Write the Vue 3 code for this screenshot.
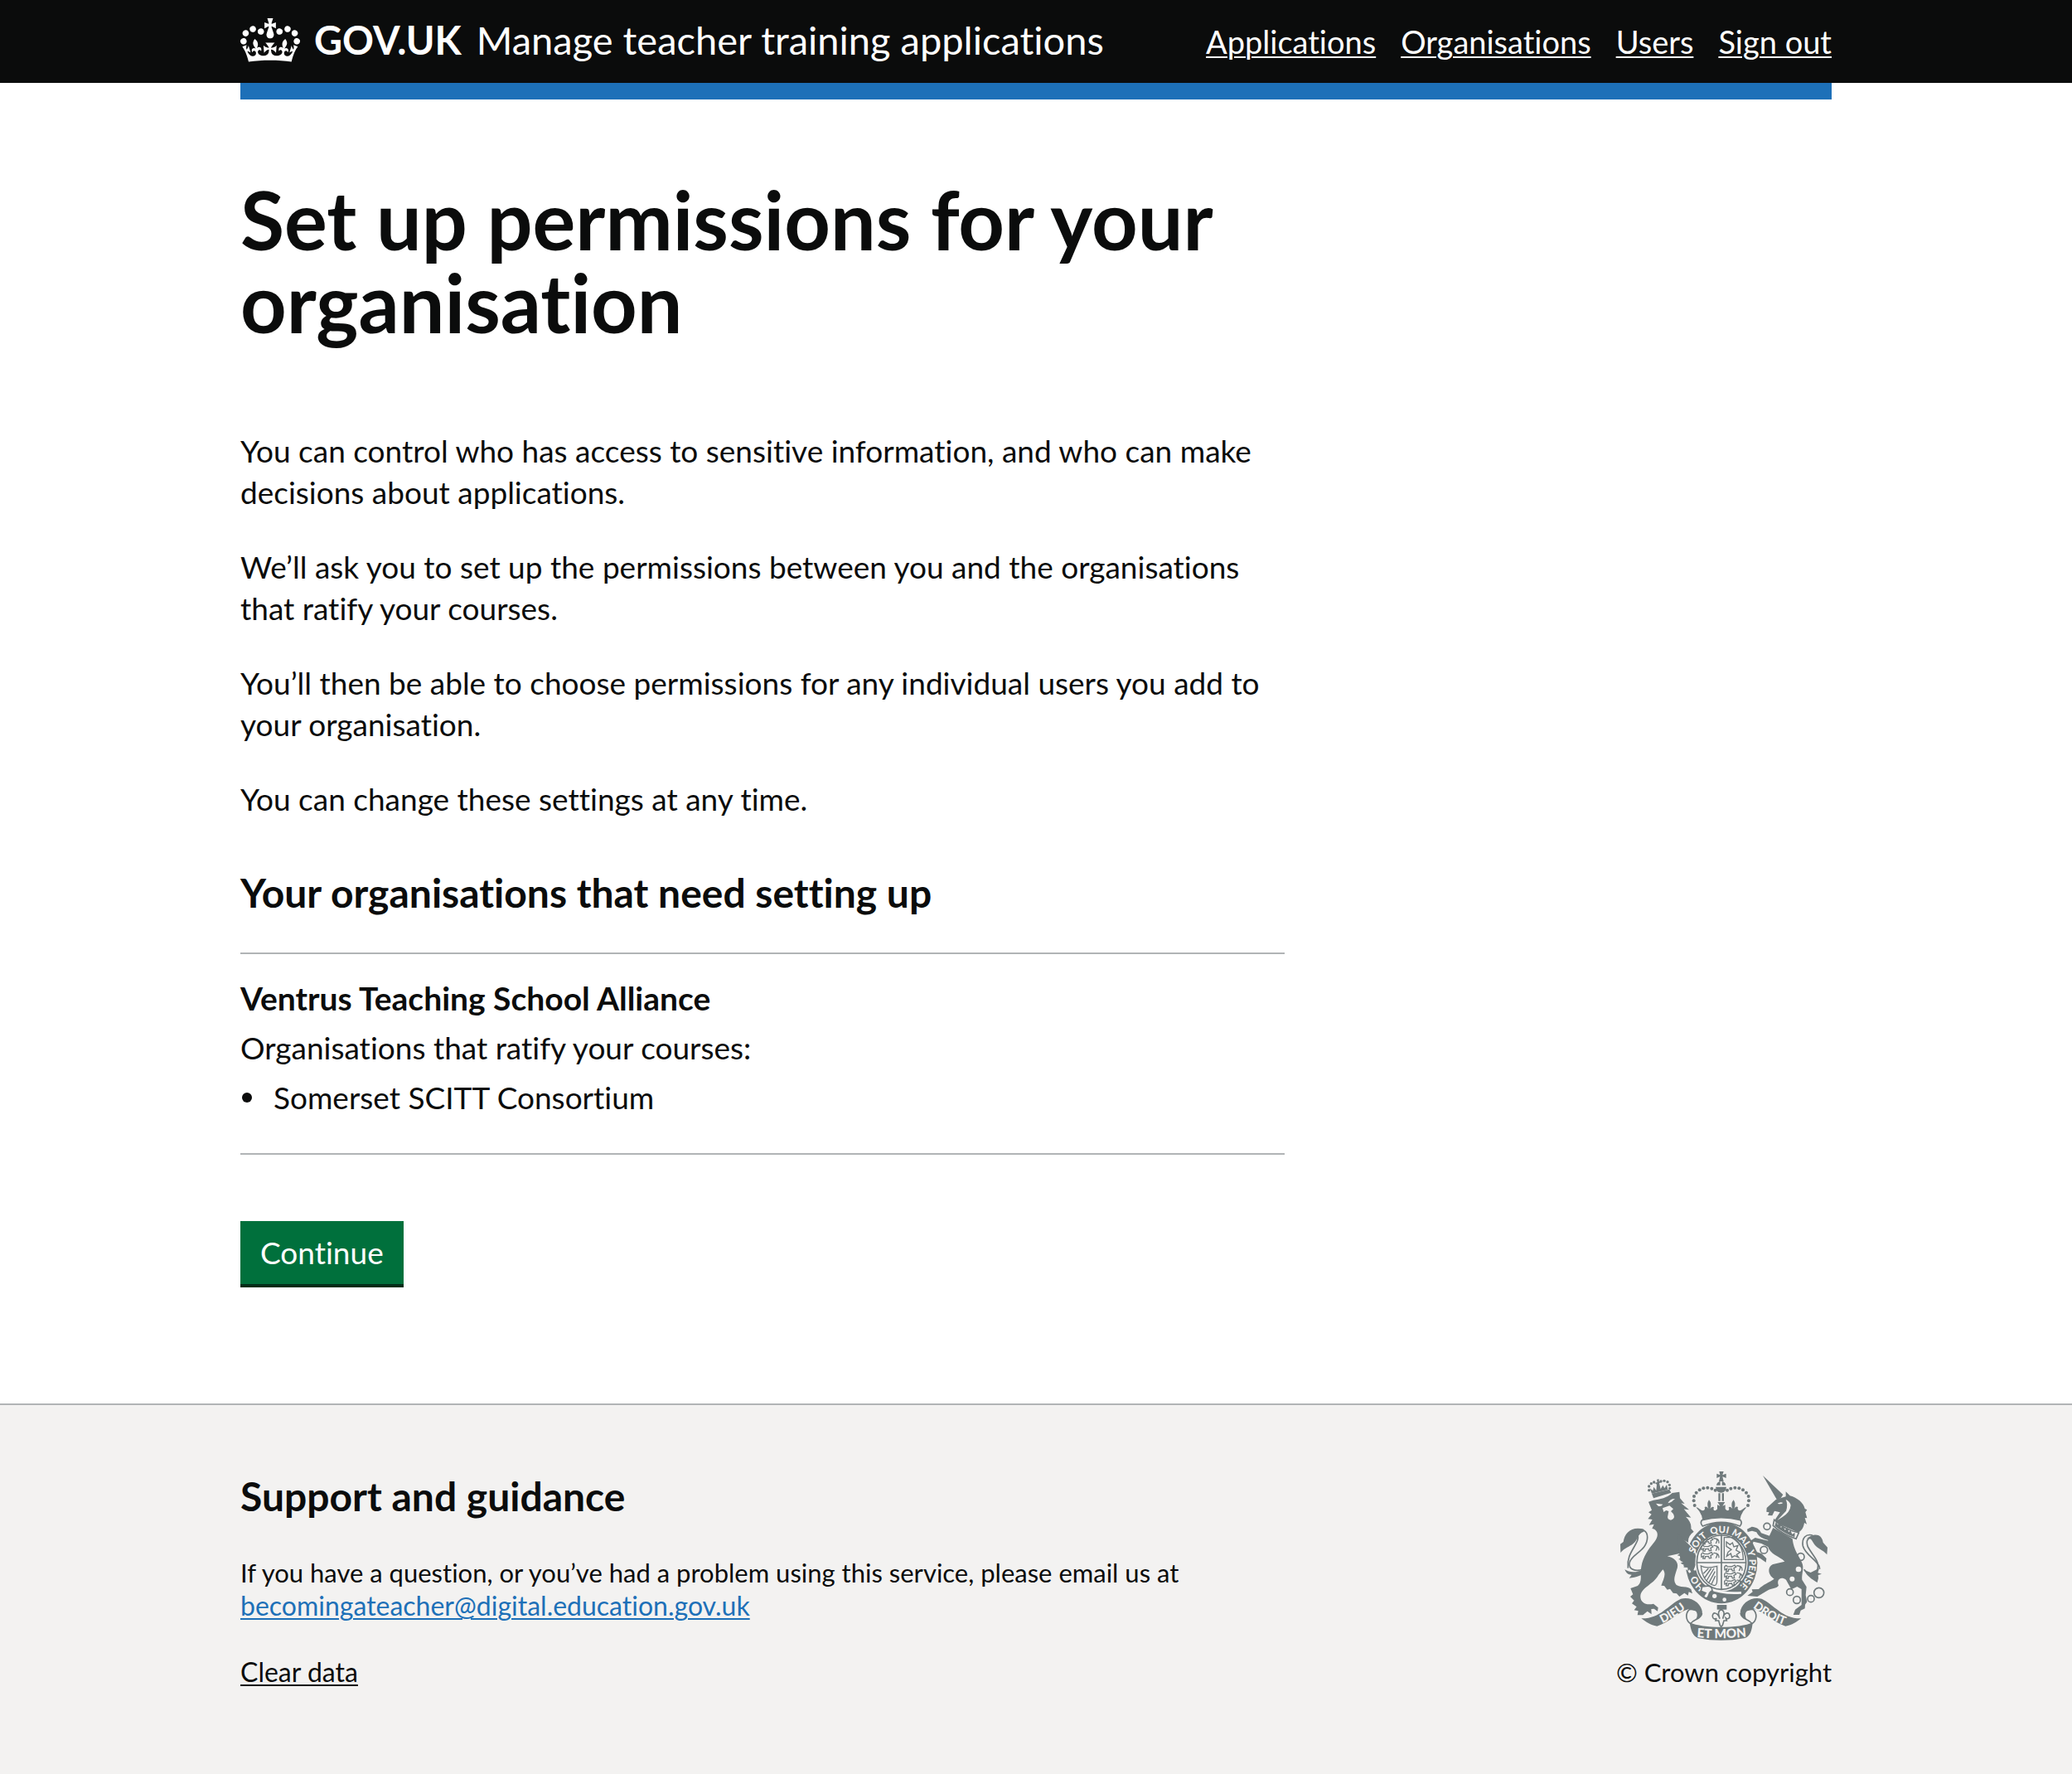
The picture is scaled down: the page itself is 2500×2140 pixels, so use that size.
<script setup>
const navigation = ['Applications', 'Organisations', 'Users', 'Sign out']

const paragraphs = [
  'You can control who has access to sensitive information, and who can make decisions about applications.',
  'We’ll ask you to set up the permissions between you and the organisations that ratify your courses.',
  'You’ll then be able to choose permissions for any individual users you add to your organisation.',
  'You can change these settings at any time.',
]

const organisations = [
  { name: 'Ventrus Teaching School Alliance', ratifiers: ['Somerset SCITT Consortium'] },
]

// Pearls on the left arch of the central crown; the right arch is mirrored.
const pearls = [
  [341, 171], [338, 154], [339, 138], [347, 125], [359, 115], [373, 109], [388, 107], [403, 110], [416, 116],
]

// Pearls on the lion's crown.
const lionPearls = [
  [176, 116], [176, 102], [184, 92], [194, 87], [219, 84], [231, 82], [243, 86], [250, 97], [251, 109],
]

// Origin of each walking lion on the shield.
const shieldLions = [[362, 287], [362, 313], [362, 340], [446, 386], [446, 412], [446, 438]]

// Words of the garter, placed clockwise from the foot of the ring.
const garterWords = [
  { text: 'HO', at: '14%' },
  { text: 'SOIT', at: '36%' },
  { text: 'QUI', at: '49%' },
  { text: 'MAL', at: '61%' },
  { text: 'Y', at: '70%' },
  { text: 'PENSE', at: '81%' },
]
</script>

<template>
  <div class="page">
    <header class="header">
      <div class="container header-row">
        <a class="logo" href="#">
          <svg class="logo-crown" viewBox="0 0 132 97" aria-hidden="true">
            <path fill="currentColor" fill-rule="evenodd" d="M25 30.2c3.5 1.5 7.7-.2 9.1-3.7 1.5-3.6-.2-7.8-3.9-9.2-3.6-1.4-7.6.3-9.1 3.9-1.4 3.5.3 7.5 3.9 9zM9 39.5c3.6 1.5 7.8-.2 9.2-3.7 1.5-3.6-.2-7.8-3.9-9.1-3.6-1.5-7.6.2-9.1 3.8-1.4 3.5.3 7.5 3.8 9zM4.4 57.2c3.5 1.5 7.7-.2 9.1-3.8 1.5-3.6-.2-7.7-3.9-9.1-3.5-1.5-7.6.3-9.1 3.8-1.4 3.5.3 7.6 3.9 9.1zm38.3-21.4c3.5 1.5 7.7-.2 9.1-3.8 1.5-3.6-.2-7.7-3.9-9.1-3.6-1.5-7.6.3-9.1 3.8-1.3 3.6.4 7.7 3.9 9.1zm64.4-5.6c-3.6 1.5-7.8-.2-9.1-3.7-1.5-3.6.2-7.8 3.8-9.2 3.6-1.4 7.7.3 9.2 3.9 1.3 3.5-.4 7.5-3.9 9zm15.9 9.3c-3.6 1.5-7.7-.2-9.1-3.7-1.5-3.6.2-7.8 3.7-9.1 3.6-1.5 7.7.2 9.2 3.8 1.5 3.5-.3 7.5-3.8 9zm4.7 17.7c-3.6 1.5-7.8-.2-9.2-3.8-1.5-3.6.2-7.7 3.9-9.1 3.6-1.5 7.7.3 9.2 3.8 1.3 3.5-.4 7.6-3.9 9.1zM89.3 35.8c-3.6 1.5-7.8-.2-9.2-3.8-1.4-3.6.2-7.7 3.9-9.1 3.6-1.5 7.7.3 9.2 3.8 1.4 3.6-.3 7.7-3.9 9.1zM69.7 17.7l8.9 4.7V9.3l-8.9 2.8c-.2-.3-.5-.6-.9-.9L72.4 0H59.6l3.5 11.2c-.3.3-.6.5-.9.9l-8.8-2.8v13.1l8.8-4.7c.3.3.6.7.9.9l-5 15.4v.1c-.2.8-.4 1.6-.4 2.4 0 4.1 3.1 7.5 7 8.1h.2c.3 0 .7.1 1 .1.4 0 .7 0 1-.1h.2c4-.6 7.1-4.1 7.1-8.1 0-.8-.1-1.7-.4-2.4V34l-5.1-15.4c.4-.2.7-.6 1-.9zM66 92.8c16.9 0 32.8 1.1 47.1 3.2 4-16.9 8.9-26.7 14-33.5l-9.6-3.4c1 4.9 1.1 7.2 0 10.2-1.5-1.4-3-4.3-4.2-8.7L108.6 76c2.8-2 5-3.2 7.5-3.3-4.4 9.4-10 11.9-13.6 11.2-4.3-.8-6.3-4.6-5.6-7.9 1-4.7 5.7-5.9 8-.5 4.3-8.7-3-11.4-7.6-8.8 7.1-7.2 7.9-13.5 2.1-21.1-8 6.1-8.1 12.3-4.5 20.8-4.7-5.4-12.1-2.5-9.5 6.2 3.4-5.2 7.9-2 7.2 3.1-.6 4.3-6.4 7.8-13.5 7.2-10.3-.9-10.9-8-11.2-13.8 2.5-.5 7.1 1.8 11 7.3L80.2 60c-4.1 4.4-8 5.3-12.3 5.4 1.4-4.4 8-11.6 8-11.6H55.5s6.4 7.2 7.9 11.6c-4.2-.1-8-1-12.3-5.4l1.4 16.4c3.9-5.5 8.5-7.7 10.9-7.3-.3 5.8-.9 12.8-11.1 13.8-7.2.6-12.9-2.9-13.5-7.2-.7-5 3.8-8.3 7.1-3.1 2.7-8.7-4.6-11.6-9.4-6.2 3.7-8.5 3.6-14.7-4.6-20.8-5.8 7.6-5 13.9 2.2 21.1-4.7-2.6-11.9.1-7.7 8.8 2.3-5.5 7.1-4.2 8.1.5.7 3.3-1.3 7.1-5.7 7.9-3.5.7-9-1.8-13.5-11.2 2.5.1 4.7 1.3 7.5 3.3l-4.7-15.4c-1.2 4.4-2.7 7.2-4.3 8.7-1.1-3-.9-5.3 0-10.2l-9.5 3.4c5 6.9 9.9 16.7 14 33.5 14.8-2.1 30.8-3.2 47.7-3.2z" />
          </svg>
          <span class="logo-name">GOV.UK</span>
          <span class="product-name">Manage teacher training applications</span>
        </a>
        <nav class="nav" aria-label="Main">
          <a v-for="item in navigation" :key="item" class="nav-link" href="#">{{ item }}</a>
        </nav>
      </div>
    </header>
    <div class="container"><div class="header-bar"></div></div>

    <main class="container main">
      <div class="two-thirds">
        <h1 class="heading-xl">Set up permissions for your organisation</h1>
        <p v-for="text in paragraphs" :key="text" class="body">{{ text }}</p>

        <h2 class="heading-m">Your organisations that need setting up</h2>
        <section v-for="org in organisations" :key="org.name" class="organisation">
          <h3 class="heading-s">{{ org.name }}</h3>
          <p class="organisation-text">Organisations that ratify your courses:</p>
          <ul class="list">
            <li v-for="name in org.ratifiers" :key="name" class="list-item">{{ name }}</li>
          </ul>
        </section>

        <button class="button" type="button">Continue</button>
      </div>
    </main>

    <footer class="footer">
      <div class="container footer-row">
        <div class="footer-support">
          <h2 class="heading-m footer-heading">Support and guidance</h2>
          <p class="footer-text">
            If you have a question, or you’ve had a problem using this service, please email us at
            <a class="footer-link email" href="mailto:becomingateacher@digital.education.gov.uk">becomingateacher@digital.education.gov.uk</a>
          </p>
          <p class="footer-text"><a class="footer-link" href="#">Clear data</a></p>
        </div>

        <a class="copyright" href="#">
          <svg class="crest" viewBox="72 48 750 612" aria-hidden="true">
            <defs>
              <path id="garter-text" d="M438 488 A101 109 0 0 1 438 270 A101 109 0 0 1 438 488" />
              <path id="motto-left" d="M214 602 Q262 582 318 538" />
              <path id="motto-middle" d="M350 648 Q437 656 528 646" />
              <path id="motto-right" d="M549 538 Q606 584 668 604" />
            </defs>

            <!-- Lion -->
            <g class="ink">
              <path d="M186 128 L250 113 L256 125 L192 145Z" />
              <path d="M186 128 l-7 -19 11 9 3 -14 9 13 2 -22 -7 -5 9 -3 -2 -10 8 -1 0 9 9 0 -8 6 5 21 8 -14 6 11 8 -13 4 18Z" />
              <circle v-for="[x, y] in lionPearls" :key="`${x}-${y}`" :cx="x" :cy="y" r="5" />
              <path d="M174 158 L192 152 C215 150 242 143 260 126 L286 122 L288 145 L305 165 L292 163 L321 187 L302 184 L328 215 L309 212 C324 226 330 240 328 255 L338 266 C321 278 315 293 319 309 C336 326 346 346 348 372 L338 405 L328 400 L324 412 L316 398 L300 398 L305 388 L290 380 L306 372 L282 366 L300 357 L278 352 L290 344 L242 355 C274 362 286 382 276 404 C269 427 262 443 275 459 C294 470 313 461 328 474 L333 490 L320 484 L317 497 L304 488 L286 501 L276 490 L263 488 L252 473 L242 476 L231 462 L220 461 C228 438 240 419 226 403 L210 423 C193 456 148 468 145 498 C143 522 165 534 192 527 L209 541 L207 554 L194 545 L184 546 L185 565 L170 554 L154 568 L134 568 L137 553 L122 550 L131 538 L114 526 L122 515 L108 501 L118 493 L109 471 L135 462 C154 445 142 420 148 393 C154 356 174 329 196 302 C214 279 207 258 187 255 L194 239 L176 242 L188 222 L172 220 L185 203 L174 196 L186 188Z" />
              <path d="M157 257 C112 246 88 270 83 303 L72 311 L73 342 C88 324 105 321 119 309 C137 295 134 273 157 266Z" />
              <path d="M157 401 C137 412 111 418 88 403 C94 418 102 422 113 422 L104 434 C130 431 153 423 167 410Z" />
            </g>
            <path class="paper" d="M270 147 Q253 146 244 163 Q258 160 262 154Z M201 164 l25 3 q-6 9 -17 6Z M225 181 l25 -9 14 12 -9 8 9 10 q9 18 -9 22 q-16 -2 -10 -21 l2 -11 -9 -3 -9 6Z" />
            <path class="line" d="M129 261 C150 254 170 262 170 286 C170 336 112 346 105 379 C101 402 128 413 155 401" />
            <path class="line" d="M133 274 C150 306 91 338 100 398" />

            <!-- Unicorn -->
            <g class="ink">
              <path d="M588 63 L661 132 L653 145 L639 151Z" />
              <path d="M602 180 L635 150 L671 139 L671 121 L686 136 C713 143 735 162 740 183 L748 187 L742 196 L748 217 L740 216 L747 239 L738 234 C735 250 731 260 717 269 L627 230 L650 196 L630 191 L622 208 L606 207 L611 196 L601 194Z" />
              <path d="M625 252 L695 292 C700 335 719 354 729 377 C739 397 728 415 730 440 L746 466 L743 496 L748 520 L741 530 L740 544 L725 551 L720 567 L698 567 L705 548 L728 531 L728 474 L712 465 L691 475 L672 440 C654 426 636 438 645 461 C636 474 621 468 603 480 L568 501 L532 498 L551 484 L548 475 L573 474 C588 457 611 450 629 437 C603 420 606 391 625 384 L667 374 C648 354 613 349 606 318 C604 294 614 276 625 252Z" />
              <path d="M612 299 C589 291 573 286 565 268 L549 263 L533 267 L531 257 L548 248 C563 249 577 256 582 271 L612 281Z" />
              <path d="M614 325 L583 309 L554 302 L548 316 L557 320 L567 340 L584 346 L601 363 L599 377 L579 363 L559 354 L551 332 L543 320 L545 298 L560 288 L611 300Z" />
              <path d="M745 292 C774 268 802 275 806 305 L822 323 L820 349 C804 331 787 329 775 313 C765 300 765 286 745 292Z" />
              <path d="M738 405 L761 414 L792 398 L787 415 L801 419 L788 423 L789 434 L785 450 C764 438 745 424 738 405Z" />
            </g>
            <g class="line">
              <path d="M768 279 C744 273 728 288 733 318 C742 353 794 372 794 401" />
              <path d="M764 288 C748 290 744 300 751 321 C769 354 798 375 784 407 C772 425 749 420 737 403" />
              <circle cx="603" cy="247" r="12" />
              <circle cx="592" cy="332" r="13" />
              <circle cx="725" cy="357" r="13" />
              <circle cx="686" cy="485" r="12" />
              <circle cx="711" cy="513" r="13" />
              <circle cx="762" cy="509" r="12" />
              <circle cx="791" cy="487" r="18" />
            </g>
            <g class="paper">
              <circle cx="717" cy="402" r="10" />
              <circle cx="694" cy="437" r="9" />
              <path d="M641 164 q11 -8 20 -2 q-9 7 -20 2Z M671 150 q13 5 18 20 q-2 25 -30 43 l-19 12 32 -34 q8 -23 -1 -41Z" />
            </g>
            <path class="band" d="M629 223 C654 248 685 263 718 270 L708 292 C680 282 650 268 625 244Z" />
            <path class="ink" d="M631 245 L635 230 L642 241 L652 236 L653 252 L661 246 L668 260 L678 252 L681 268 L688 262 L694 275 L704 270 L703 286 Q665 272 631 245Z" />

            <!-- Crown -->
            <g class="ink">
              <path d="M430 48 h16 l-4 13 13 -5 v16 l-13 -5 4 17 h-17 l4 -17 -12 5 v-16 l12 5Z" />
              <path d="M420 98 Q422 86 434 84 V98Z M440 84 Q452 86 454 98 H440Z M417 104 h39 q-2 20 -19 21 q-18 -1 -20 -21Z" />
              <path d="M427 127 h7 v28 h-7Z M440 127 h7 v28 h-7Z" />
              <g v-for="side in ['left', 'right']" :key="side" :transform="side === 'right' ? 'translate(875 0) scale(-1 1)' : null">
                <circle v-for="[x, y] in pearls" :key="`${x}-${y}`" :cx="x" :cy="y" r="6" />
                <path d="M346 178 C356 178 361 189 371 190 Q381 187 377 177 Q385 173 391 183 Q383 166 393 151 Q405 165 397 183 Q405 173 411 178 Q406 190 416 190 L429 180 V198 Q395 199 366 207 Q359 191 346 178Z" />
              </g>
              <path d="M424 159 h27 l-9 14 10 -4 v30 h-29 v-30 l10 4Z" />
              <path d="M364 198 Q437 182 511 198 L505 224 Q437 208 370 224Z" />
            </g>

            <!-- Garter -->
            <ellipse class="ink" cx="438" cy="379" rx="130" ry="147" />
            <path class="gap" d="M289 294 L319 311 C338 328 349 350 350 378 L340 406 M300 399 L316 400 L325 414" />
            <path class="ink" d="M276 270 L319 311 C338 328 349 350 348 378 L337 405 L327 399 L317 409 L315 390 L300 391 L306 379 L290 372Z" />
            <path class="band" d="M368 224 Q437 206 507 224 Q515 234 505 246 Q437 218 370 246 Q359 234 368 224Z" />
            <ellipse class="paper" cx="438" cy="379" rx="95" ry="104" />
            <text v-for="word in garterWords" :key="word.text" class="garter-text"><textPath href="#garter-text" :startOffset="word.at">{{ word.text }}</textPath></text>
            <path class="gap" d="M392 470 Q440 492 510 487" />
            <path class="band" d="M382 463 q22 -4 23 16 q-10 4 -13 17 q-6 19 -19 4 l8 -12 -17 -7 4 -16Z" />
            <circle class="paper" cx="413" cy="499" r="8" />
            <circle class="paper" cx="449" cy="512" r="7" />

            <!-- Shield -->
            <ellipse class="line" cx="438" cy="377" rx="89" ry="98" />
            <path class="line" d="M438 276 V476 M350 378 H526" />
            <g class="charge">
              <path v-for="[x, y] in shieldLions" :key="`${x}-${y}`" :transform="`translate(${x} ${y})`" d="M3 8 q6 -10 10 -2 l15 1 12 -6 5 7 -8 4 2 9 -7 1 -3 -7 -11 1 -2 8 -7 -1 3 -9 -8 4Z M47 4 q10 -3 14 6 l-5 12 M53 4 q15 0 14 17" />
              <path d="M448 287 h32 q36 24 37 80 h-69Z" />
              <path d="M456 303 l13 10 9 -7 5 15 15 -5 -7 17 14 8 -12 8 7 10 -14 -6 -10 6 -4 -14 -15 10 5 -15 12 -9 -18 -12Z" />
              <path d="M364 390 q18 11 58 1 v50 q0 20 -10 20 q-42 -11 -48 -71Z M391 399 L373 418 M401 399 L378 432 M411 399 L384 444 M415 410 L392 452 M416 426 L401 458" />
            </g>

            <!-- Fleur-de-lis -->
            <path class="ink" d="M422 531 h35 v17 h-35Z" />
            <path class="line" d="M437 546 C421 559 429 568 432 581 C423 554 404 557 406 573 C407 584 416 583 420 579 L417 588 H428 L433 605 L437 610 L442 605 L447 588 H457 L454 579 C460 584 469 580 468 570 C465 553 447 560 443 581 C447 566 453 558 437 546Z" />

            <!-- Motto ribbon -->
            <g v-for="side in ['left', 'right']" :key="side" :transform="side === 'right' ? 'translate(875 0) scale(-1 1)' : null">
              <path class="ink" d="M148 580 C215 582 245 531 291 509 C328 499 367 524 369 560 C354 555 343 546 320 546 C279 557 250 594 205 608 C181 605 165 592 148 580Z" />
              <path class="band" d="M322 548 C342 545 357 557 367 563 C364 584 339 581 326 599 C309 588 306 562 322 548Z" />
              <path class="ink" d="M322 546 C346 544 358 556 369 560 C368 574 352 580 346 583 C352 572 352 560 344 552Z" />
            </g>
            <path class="ink" d="M323 595 C370 617 505 617 551 595 C549 622 542 648 520 652 Q437 667 354 652 C334 645 327 621 323 595Z" />
            <text class="motto-text"><textPath href="#motto-left" startOffset="50%">DIEU</textPath></text>
            <text class="motto-text motto-middle"><textPath href="#motto-middle" startOffset="50%">ET MON</textPath></text>
            <text class="motto-text"><textPath href="#motto-right" startOffset="50%">DROIT</textPath></text>
          </svg>
          <span>© Crown copyright</span>
        </a>
      </div>
    </footer>
  </div>
</template>

<style>
body {
  margin: 0;
  background: #ffffff;
}
</style>

<style scoped>
.page {
  display: flex;
  flex-direction: column;
  min-height: 100vh;
  color: #0b0c0c;
  font-family: Lato, "Liberation Sans", sans-serif;
  font-size: 37px;
  line-height: 50px;
  font-variant-ligatures: none;
}

.container {
  box-sizing: border-box;
  width: 100%;
  max-width: 1980px;
  margin: 0 auto;
  padding: 0 30px;
}

a {
  text-decoration-thickness: 2px;
  text-underline-offset: 3px;
}

h1, h2, h3, p, ul {
  margin: 0;
}

.header {
  background: #0b0c0c;
  color: #ffffff;
}

.header-row {
  display: flex;
  flex-wrap: wrap;
  align-items: center;
  justify-content: space-between;
  min-height: 100px;
}

.header-bar {
  height: 20px;
  background: #1d70b8;
}

.logo {
  display: flex;
  align-items: center;
  padding-bottom: 4px;
  color: inherit;
  font-size: 47px;
  line-height: 60px;
  text-decoration: none;
}

.logo-crown {
  width: 72px;
  height: 53px;
  margin-right: 17px;
}

.logo-name {
  margin-right: 18px;
  font-weight: 700;
}

.nav {
  display: flex;
  flex-wrap: wrap;
  gap: 30px;
  font-size: 38px;
}

.nav-link {
  color: #ffffff;
}

.main {
  padding-top: 95px;
  padding-bottom: 140px;
}

.two-thirds {
  max-width: 1260px;
}

.heading-xl {
  margin-bottom: 104px;
  font-size: 97px;
  line-height: 100px;
}

.body {
  margin-bottom: 40px;
}

.heading-m {
  margin: 18px 0 42px;
  font-size: 48px;
  line-height: 60px;
}

.body + .heading-m {
  margin-top: 58px;
}

.organisation {
  display: flex;
  flex-direction: column;
  gap: 10px;
  padding: 28px 0 42px;
  border-top: 2px solid #b1b4b6;
  border-bottom: 2px solid #b1b4b6;
}

.heading-s {
  font-size: 39px;
}

.list {
  padding: 0;
  list-style: none;
}

.list-item {
  display: flex;
  align-items: center;
  gap: 26px;
  padding-left: 2px;
}

.list-item::before {
  content: "";
  flex: none;
  width: 12px;
  height: 12px;
  border-radius: 50%;
  background: #0b0c0c;
}

.button {
  display: block;
  margin: 80px 0 4px;
  padding: 13px 24px;
  border: 0;
  background: #00703c;
  box-shadow: 0 4px 0 #002d18;
  color: #ffffff;
  font: inherit;
}

.footer {
  flex-grow: 1;
  padding: 80px 0 100px;
  border-top: 2px solid #b1b4b6;
  background: #f3f2f1;
  font-size: 31px;
  line-height: 40px;
}

.footer-row {
  display: flex;
  justify-content: space-between;
  align-items: flex-start;
  gap: 60px;
}

.footer-support {
  flex: 0 1 1260px;
}

.footer-heading {
  margin-top: 0;
}

.footer-text + .footer-text {
  margin-top: 40px;
}

.footer-link {
  color: inherit;
  font-size: 32px;
}

.email {
  color: #1d70b8;
}

.copyright {
  display: flex;
  flex-direction: column;
  align-items: center;
  gap: 18px;
  color: inherit;
  text-decoration: none;
  white-space: nowrap;
}

.crest {
  display: block;
  width: 250px;
  height: 204px;
}

.ink {
  fill: #6f797b;
}

.paper {
  fill: #f3f2f1;
}

.line {
  fill: none;
  stroke: #6f797b;
  stroke-width: 5;
}

.gap {
  fill: none;
  stroke: #f3f2f1;
  stroke-width: 8;
}

.band {
  fill: #f3f2f1;
  stroke: #6f797b;
  stroke-width: 5;
}

.charge {
  fill: none;
  stroke: #6f797b;
  stroke-width: 4;
}

.garter-text,
.motto-text {
  fill: #f3f2f1;
  font-weight: 900;
  text-anchor: middle;
}

.garter-text {
  font-size: 34px;
}

.motto-text {
  font-size: 42px;
}

.motto-middle {
  font-size: 46px;
}
</style>
